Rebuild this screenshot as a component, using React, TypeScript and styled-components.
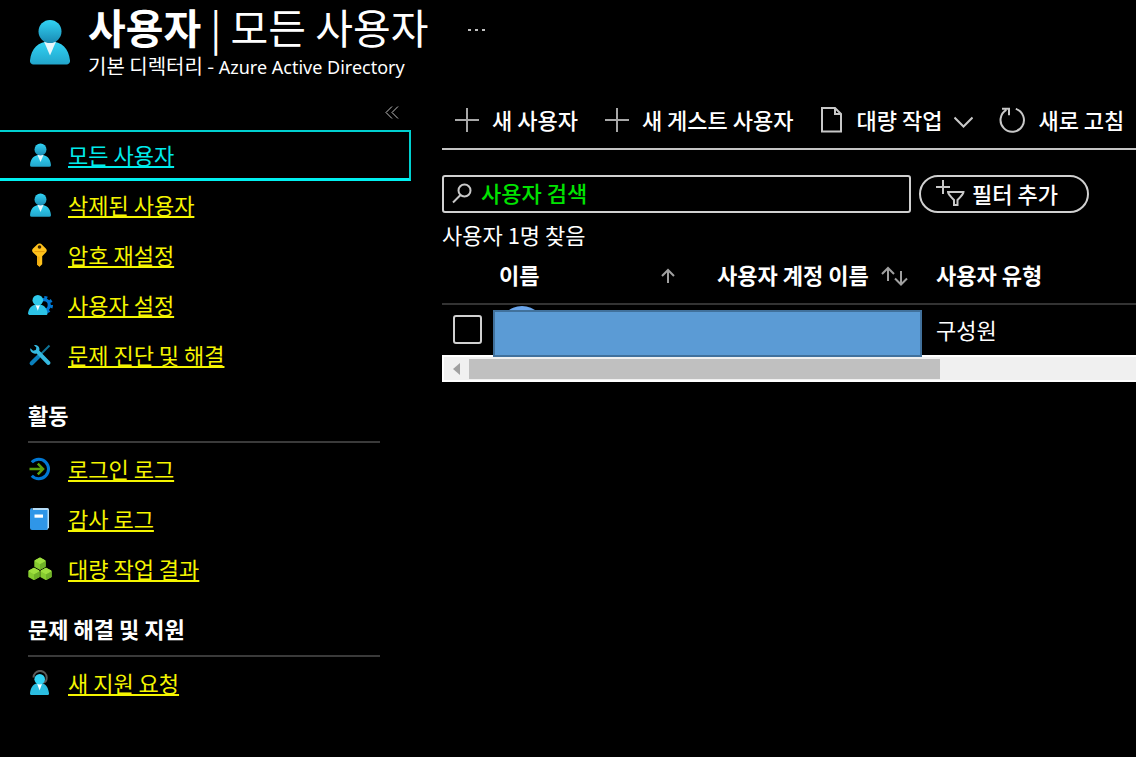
import React, { useId } from "react";
import styled, { createGlobalStyle } from "styled-components";

const GlobalStyle = createGlobalStyle`
  * { box-sizing: border-box; }
  body {
    margin: 0;
    background: #000;
    color: #fff;
    font-family: "Noto Sans CJK KR", "Noto Sans", sans-serif;
    font-size: 22px;
    line-height: 32px;
  }
  svg { display: block; flex: none; }
  button, input { font: inherit; color: inherit; }
`;

const Page = styled.div`
  min-height: 100vh;
  overflow-x: clip;
`;

const Header = styled.header`
  display: flex;
  align-items: flex-start;
  height: 98px;
  padding-left: 30px;
`;

const HeaderIcon = styled.div`
  padding-top: 19px;
  margin-right: 18px;
`;

const Title = styled.h1`
  margin: 0;
  font-size: 41px;
  line-height: 52px;
  font-weight: 400;
  white-space: nowrap;
`;

const Subtitle = styled.p`
  margin: 0;
  font-size: 20px;
  line-height: 28px;
  white-space: nowrap;
`;

const Latin = styled.span`
  font-family: "Noto Sans", sans-serif;
  font-size: 18px;
`;

const PlainButton = styled.button`
  display: flex;
  align-items: center;
  padding: 0;
  border: 0;
  background: none;
  white-space: nowrap;
  cursor: pointer;
`;

const ButtonText = styled.span`
  padding-bottom: 3px;
`;

const MoreButton = styled(PlainButton)`
  margin: 20px 0 0 39px;
  height: 20px;
`;

const Columns = styled.div`
  display: flex;
  align-items: flex-start;
  gap: 31px;
`;

const Sidebar = styled.nav`
  flex: none;
  width: 411px;
`;

const CollapseRow = styled.div`
  display: flex;
  align-items: flex-start;
  justify-content: flex-end;
  height: 32px;
  padding: 8px 12px 0 0;
`;

const NavList = styled.ul`
  margin: 0;
  padding: 0;
  list-style: none;
`;

const NavItem = styled.li<{ $active?: boolean }>`
  display: flex;
  align-items: center;
  gap: 16px;
  height: 50px;
  padding-left: 28px;
  ${(p) =>
    p.$active &&
    `
    height: 51px;
    margin-bottom: -1px;
    border: solid #00d0d0;
    border-width: 2px 2px 3px 0;
    border-bottom-color: #00f0f0;
  `}
`;

const NavIcon = styled.span`
  display: flex;
  justify-content: center;
  width: 24px;
`;

const NavLink = styled.a<{ $active?: boolean }>`
  padding-bottom: 2px;
  color: ${(p) => (p.$active ? "#00ebeb" : "#f5f500")};
  text-decoration: underline;
  text-decoration-thickness: 2px;
  text-underline-offset: 2px;
  text-decoration-skip-ink: none;
  white-space: nowrap;
`;

const SectionTitle = styled.h2`
  margin: 0 31px 1px 28px;
  padding: 18px 0 11px;
  border-bottom: 2px solid #3a3a3a;
  font-size: 22px;
  line-height: 32px;
  font-weight: 700;
`;

const Main = styled.main`
  flex: 1;
  min-width: 0;
`;

const Toolbar = styled.div`
  display: flex;
  align-items: center;
  gap: 26px;
  height: 52px;
  padding: 0 0 6px 12px;
  border-bottom: 2px solid #c4c4c4;
`;

const Command = styled(PlainButton)`
  gap: 12px;
  font-weight: 500;
`;

const FilterRow = styled.div`
  display: flex;
  gap: 8px;
  margin-top: 25px;
`;

const SearchBox = styled.label`
  display: flex;
  align-items: center;
  gap: 9px;
  flex: 0 1 469px;
  height: 38px;
  padding: 0 8px;
  border: 2px solid #d0d0d0;
  border-radius: 3px;
`;

const SearchInput = styled.input`
  flex: 1;
  min-width: 0;
  height: 34px;
  padding: 0 0 4px;
  border: 0;
  outline: 0;
  background: none;
  font-weight: 500;
  &::placeholder {
    color: #00e400;
    opacity: 1;
  }
`;

const FilterButton = styled(PlainButton)`
  flex: none;
  gap: 7px;
  height: 38px;
  padding: 0 29px 0 15px;
  border: 2px solid #d0d0d0;
  border-radius: 19px;
  font-weight: 500;
`;

const Count = styled.p`
  margin: 5px 0 2px;
`;

const Grid = styled.div`
  position: relative;
`;

const Table = styled.table`
  width: 100%;
  table-layout: fixed;
  border-collapse: collapse;
`;

const HeadCell = styled.th`
  height: 52px;
  padding: 0 0 7px;
  border-bottom: 2px solid #333;
  text-align: left;
  font-weight: 700;
  white-space: nowrap;
`;

const HeadContent = styled.span<{ $spread?: boolean }>`
  display: flex;
  align-items: center;
  justify-content: ${(p) => (p.$spread ? "space-between" : "flex-start")};
  gap: 12px;
  padding-right: ${(p) => (p.$spread ? "42px" : "0")};
`;

const Cell = styled.td`
  height: 51px;
  padding: 0 0 2px;
`;

const CheckBox = styled.input`
  appearance: none;
  display: block;
  width: 29px;
  height: 29px;
  margin: 0 0 0 11px;
  border: 2px solid #d0d0d0;
  border-radius: 3px;
`;

const Avatar = styled.div`
  width: 46px;
  height: 46px;
  border-radius: 50%;
  background: #6aa5ea;
`;

const Redaction = styled.div`
  position: absolute;
  left: 51px;
  bottom: 25px;
  width: 429px;
  height: 47px;
  border: 2px solid #41719c;
  background: #5b9bd5;
`;

const ScrollTrack = styled.div`
  display: flex;
  align-items: center;
  height: 27px;
  border: solid #fff;
  border-width: 2px 0 2px 2px;
  background: #f0f0f0;
`;

const ScrollButton = styled(PlainButton)`
  justify-content: center;
  width: 25px;
  height: 20px;
`;

const ScrollThumb = styled.div`
  width: 68%;
  height: 20px;
  background: #c0c0c0;
`;

function UserIcon({ width, height }: { width: number; height: number }) {
  const id = useId();
  return (
    <svg width={width} height={height} viewBox="0 0 40 46" aria-hidden="true">
      <defs>
        <linearGradient id={id} x1="0" y1="0" x2="0" y2="1">
          <stop offset="0" stopColor="#32d4f5" />
          <stop offset="1" stopColor="#198ab3" />
        </linearGradient>
        <linearGradient id={`${id}b`} x1="0" y1="0" x2="0" y2="1">
          <stop offset="0" stopColor="#32d4f5" />
          <stop offset="1" stopColor="#22a5cb" />
        </linearGradient>
      </defs>
      <path
        d="M3.5 45.500h33a3.500 3.500 0 0 0 3.500-4C38.800 29.500 32 22.500 20 22.500S1.200 29.500 0 41.500a3.500 3.500 0 0 0 3.500 4z"
        fill={`url(#${id}b)`}
      />
      <path d="M14 22.500h12l-6 14z" fill="#e8f7fc" />
      <circle cx="20" cy="12.500" r="11.500" fill={`url(#${id})`} />
    </svg>
  );
}

const KeyIcon = () => (
  <svg width="24" height="24" viewBox="0 0 24 24" aria-hidden="true">
    <path
      d="M11.500 0.500c1 0 1.600.3 2.300 1l4 4c1.300 1.300 1.300 2.600 0 3.900l-3.600 3.800v8L11.500 23.800 9 21.500v-8.300L5 9.400c-1.200-1.300-1.200-2.600 0-3.900l4.200-4c.7-.7 1.300-1 2.300-1z"
      fill="#ffc21c"
    />
    <path d="M9 13.500h2.600v10.200L9 21.500z" fill="#f0ac10" />
    <path d="M6.500 8.600h10" stroke="#e59a0a" strokeWidth="1" />
    <circle cx="11.500" cy="4" r="1.800" fill="#3d2600" />
  </svg>
);

const UserSettingsIcon = () => (
  <svg width="26" height="24" viewBox="0 0 26 24" aria-hidden="true">
    <circle cx="17" cy="12" r="5.300" fill="none" stroke="#0078d4" strokeWidth="3.200" />
    <circle cx="17" cy="12" r="7.500" fill="none" stroke="#0078d4" strokeWidth="3" strokeDasharray="2.950 2.950" />
    <path d="M3 22h16c1 0 1.700-.8 1.500-1.800C19.800 14.500 17 11.500 11 11.500S2 14.500 1 20.200C.9 21.200 2 22 3 22z" fill="#2cc3e6" />
    <path d="M8.500 11.800h4.500l-2.200 6z" fill="#fff" />
    <circle cx="10.800" cy="7.200" r="5.300" fill="#2fcaec" />
  </svg>
);

const ToolsIcon = () => (
  <svg width="24" height="24" viewBox="0 0 24 24" aria-hidden="true">
    <path d="M21.500 2.500l-11 11" stroke="#0f7396" strokeWidth="2" />
    <path d="M10.500 13.500l-6.800 6.800" stroke="#0a80bd" strokeWidth="4.200" strokeLinecap="round" />
    <path
      d="M6 2.300c2.300-.8 5 .7 5.400 3.200.1.800 0 1.400-.2 2.100l10.700 11c1.700 2-.9 4.500-2.800 2.800L8.500 10.400c-2.700.9-5.600-.5-6.200-3.300-.1-.7-.1-1.300.1-1.900l2.700 2.600 2.700-.8.600-2.600z"
      fill="#35b9e0"
    />
  </svg>
);

const SignInIcon = () => (
  <svg width="24" height="24" viewBox="0 0 24 24" fill="none" aria-hidden="true">
    <path d="M3.800 5.300A9.700 9.700 0 1 1 3.800 18.700" stroke="#0078d4" strokeWidth="3" />
    <path d="M1.500 12h13M9.800 6.600l5.300 5.400-5.300 5.400" stroke="#5ba30e" strokeWidth="2.400" />
  </svg>
);

const BookIcon = () => (
  <svg width="24" height="24" viewBox="0 0 24 24" aria-hidden="true">
    <path d="M4.500 1h15a1.500 1.500 0 0 1 1.500 1.500v18L19 23H4z" fill="#b5dcf7" />
    <path d="M4 1a2 2 0 0 0-2 2v18a2 2 0 0 0 2 2h14.500a1 1 0 0 0 1-1V3H4.500z" fill="#2f96e8" />
    <rect x="6.500" y="7.500" width="8.500" height="3.200" fill="#fff" />
  </svg>
);

const Cube = ({ x, y }: { x: number; y: number }) => (
  <g transform={`translate(${x} ${y})`} strokeLinejoin="round">
    <path d="M0-5.500l5 2.700V2.900L0 5.600l-5-2.700V-2.800z" fill="#86cc30" stroke="#86cc30" strokeWidth="1.400" />
    <path d="M0-5.500l5 2.700L0 0l-5-2.800z" fill="#9fe03f" stroke="#9fe03f" />
    <path d="M0 0.600l5.500-3V3.100L0 6.200z" fill="#6fb128" />
  </g>
);

const CubesIcon = () => (
  <svg width="24" height="24" viewBox="0 0 24 24" aria-hidden="true">
    <Cube x={12} y={6.6} />
    <Cube x={6} y={16.8} />
    <Cube x={18} y={16.8} />
  </svg>
);

const SupportIcon = () => (
  <svg width="24" height="26" viewBox="0 0 24 26" aria-hidden="true">
    <path d="M5.500 7.500a6.600 6.600 0 0 1 13.200 0c0 3-1.200 4.800-3.700 5.200" fill="none" stroke="#5a5a5a" strokeWidth="2" />
    <path d="M3.500 25h16c1 0 1.700-.8 1.500-1.800C20.300 17 17.500 13 11.500 13S2.800 17 2 23.200C1.900 24.200 2.500 25 3.500 25z" fill="#2bbde0" />
    <path d="M9 13.500h5.200l-2.600 7z" fill="#fff" />
    <circle cx="11.700" cy="9.200" r="5.300" fill="#32d4f5" />
  </svg>
);

const Line = ({ w, h, d, width = 2, color = "#c8c8c8" }: { w: number; h: number; d: string; width?: number; color?: string }) => (
  <svg width={w} height={h} viewBox={`0 0 ${w} ${h}`} fill="none" stroke={color} strokeWidth={width} aria-hidden="true">
    <path d={d} />
  </svg>
);

const PlusIcon = () => <Line w={26} h={26} color="#a8a8a8" d="M1 13h24M13 1v24" />;
const PageIcon = () => <Line w={25} h={28} d="M2 2h13l6 6v17.500H2zM15 2v6h6" />;
const ChevronIcon = () => <Line w={19} h={18} d="M0.500 6.500l9 9 9-9" />;
const RefreshIcon = () => (
  <Line w={27} h={28} d="M16.800 2.900A11.700 11.700 0 1 1 7.400 3.900M3 2.800h7v6.500" />
);
const SearchIcon = () => <Line w={20} h={22} d="M1 19.500l7-7M12.500 1.500a6 6 0 1 1 0 12 6 6 0 1 1 0-12z" />;
const FilterIcon = () => (
  <Line w={29} h={30} d="M0 8h14M7 1v14M12 13h15.500c0 2-1.500 3.500-6 8v5h-3.500v-5c-4.500-4.500-6-6-6-8z" />
);
const UpIcon = () => <Line w={14} h={20} color="#a0a0a0" d="M7 19V6M1 12l6-6 6 6" />;
const UpDownIcon = () => (
  <Line w={27} h={24} color="#a0a0a0" d="M7 19V6M1 12l6-6 6 6M20 9v13M14 16.500l6 6 6-6" />
);
const CollapseIcon = () => (
  <Line w={14} h={13} width={1} color="#c0c0c0" d="M7 0.500L1 6.500l6 6M13 0.500L7 6.500l6 6" />
);

type Entry = { label: string; icon: React.ReactNode; active?: boolean };

const smallUser = <UserIcon width={21} height={24} />;

const manage: Entry[] = [
  { label: "모든 사용자", icon: smallUser, active: true },
  { label: "삭제된 사용자", icon: smallUser },
  { label: "암호 재설정", icon: <KeyIcon /> },
  { label: "사용자 설정", icon: <UserSettingsIcon /> },
  { label: "문제 진단 및 해결", icon: <ToolsIcon /> },
];

const activity: Entry[] = [
  { label: "로그인 로그", icon: <SignInIcon /> },
  { label: "감사 로그", icon: <BookIcon /> },
  { label: "대량 작업 결과", icon: <CubesIcon /> },
];

const support: Entry[] = [{ label: "새 지원 요청", icon: <SupportIcon /> }];

const NavGroup = ({ entries }: { entries: Entry[] }) => (
  <NavList>
    {entries.map((e) => (
      <NavItem key={e.label} $active={e.active}>
        <NavIcon>{e.icon}</NavIcon>
        <NavLink href="#" $active={e.active} aria-current={e.active ? "page" : undefined}>
          {e.label}
        </NavLink>
      </NavItem>
    ))}
  </NavList>
);

export default function App() {
  return (
    <Page>
      <GlobalStyle />
      <Header>
        <HeaderIcon>
          <UserIcon width={40} height={46} />
        </HeaderIcon>
        <div>
          <Title>
            <b>사용자</b> | 모든 사용자
          </Title>
          <Subtitle>
            기본 디렉터리 - <Latin>Azure Active Directory</Latin>
          </Subtitle>
        </div>
        <MoreButton aria-label="더 보기">
          <svg width="19" height="4" viewBox="0 0 19 4" fill="#c0c0c0" aria-hidden="true">
            <rect x="1" y="1" width="3" height="2" />
            <rect x="8" y="1" width="3" height="2" />
            <rect x="15" y="1" width="3" height="2" />
          </svg>
        </MoreButton>
      </Header>
      <Columns>
        <Sidebar>
          <CollapseRow>
            <PlainButton aria-label="메뉴 접기">
              <CollapseIcon />
            </PlainButton>
          </CollapseRow>
          <NavGroup entries={manage} />
          <SectionTitle>활동</SectionTitle>
          <NavGroup entries={activity} />
          <SectionTitle>문제 해결 및 지원</SectionTitle>
          <NavGroup entries={support} />
        </Sidebar>
        <Main>
          <Toolbar>
            <Command>
              <PlusIcon />
              <ButtonText>새 사용자</ButtonText>
            </Command>
            <Command>
              <PlusIcon />
              <ButtonText>새 게스트 사용자</ButtonText>
            </Command>
            <Command>
              <PageIcon />
              <ButtonText>대량 작업</ButtonText>
              <ChevronIcon />
            </Command>
            <Command>
              <RefreshIcon />
              <ButtonText>새로 고침</ButtonText>
            </Command>
          </Toolbar>
          <FilterRow>
            <SearchBox>
              <SearchIcon />
              <SearchInput type="text" placeholder="사용자 검색" aria-label="사용자 검색" />
            </SearchBox>
            <FilterButton>
              <FilterIcon />
              <ButtonText>필터 추가</ButtonText>
            </FilterButton>
          </FilterRow>
          <Count>사용자 1명 찾음</Count>
          <Grid>
            <Table>
              <colgroup>
                <col width="57" />
                <col width="218" />
                <col width="219" />
                <col />
              </colgroup>
              <thead>
                <tr>
                  <HeadCell />
                  <HeadCell>
                    <HeadContent $spread>
                      이름
                      <UpIcon />
                    </HeadContent>
                  </HeadCell>
                  <HeadCell>
                    <HeadContent>
                      사용자 계정 이름
                      <UpDownIcon />
                    </HeadContent>
                  </HeadCell>
                  <HeadCell>사용자 유형</HeadCell>
                </tr>
              </thead>
              <tbody>
                <tr>
                  <Cell>
                    <CheckBox type="checkbox" aria-label="사용자 선택" />
                  </Cell>
                  <Cell>
                    <Avatar />
                  </Cell>
                  <Cell />
                  <Cell>구성원</Cell>
                </tr>
              </tbody>
            </Table>
            <ScrollTrack>
              <ScrollButton aria-label="왼쪽으로 스크롤">
                <svg width="8" height="12" viewBox="0 0 8 12" aria-hidden="true">
                  <path d="M7 0v12L0 6z" fill="#a0a0a0" />
                </svg>
              </ScrollButton>
              <ScrollThumb />
            </ScrollTrack>
            <Redaction />
          </Grid>
        </Main>
      </Columns>
    </Page>
  );
}
